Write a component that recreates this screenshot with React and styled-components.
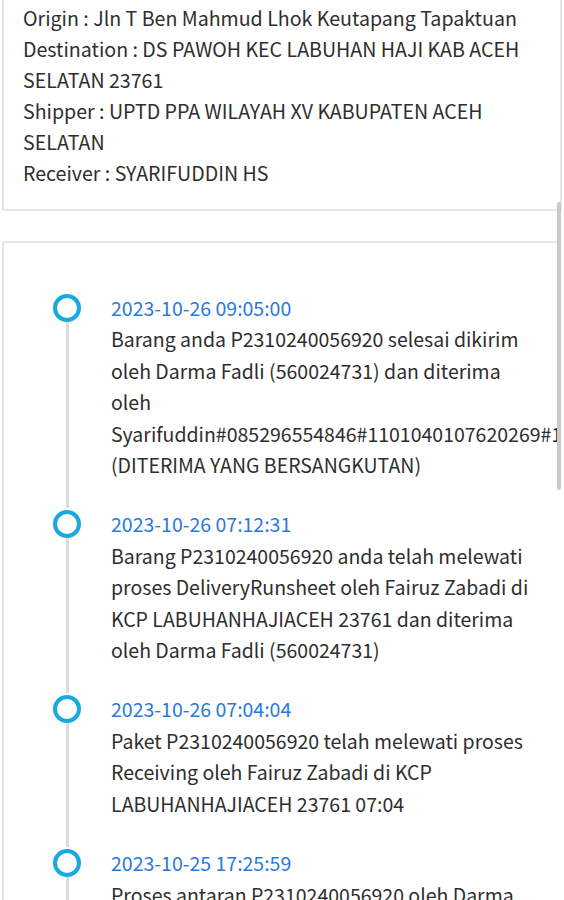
import React from 'react';
import styled, { createGlobalStyle } from 'styled-components';

const GlobalStyle = createGlobalStyle`
  html, body {
    margin: 0;
    padding: 0;
    background: #ffffff;
    overflow-x: hidden;
  }
  body {
    font-family: "Noto Sans CJK SC", "Noto Sans", sans-serif;
    color: #2e2e2e;
  }
`;

const Page = styled.div`
  display: flex;
  flex-direction: column;
  gap: 30px;
  padding: 0 2px;
`;

const InfoCard = styled.div`
  border: 2px solid #e6e6e6;
  border-top: none;
  padding: 2px 10px 21px 19px;
  font-size: 19.6px;
  line-height: 31px;
`;

const InfoLine = styled.div``;

const TrackCard = styled.div`
  border: 2px solid #e6e6e6;
  border-right-color: transparent;
  padding: 49px 0 0 49px;
`;

const Item = styled.div`
  display: flex;
`;

const Marker = styled.div`
  flex: 0 0 58px;
  display: flex;
  flex-direction: column;
  align-items: flex-start;
  padding-top: 2px;
`;

const Dot = styled.div`
  width: 28px;
  height: 28px;
  box-sizing: border-box;
  border: 4px solid #18aade;
  border-radius: 50%;
  background: #fff;
`;

const Line = styled.div`
  flex: 1;
  width: 3px;
  margin-left: 12.5px;
  background: #d8dbe0;
`;

const Body = styled.div`
  flex: 1;
  min-width: 0;
  padding: 0 20px 28px 0;
  font-size: 19.5px;
  line-height: 31.4px;
`;

const Stamp = styled.div`
  color: #2a7adb;
`;

const Text = styled.div`
  color: #2e2e2e;
`;

const Scroll = styled.div`
  position: fixed;
  top: 202px;
  right: 3px;
  width: 4px;
  height: 288px;
  border-radius: 2px;
  background: #c9c9c9;
`;

const info = [
  'Origin : Jln T Ben Mahmud Lhok Keutapang Tapaktuan',
  'Destination : DS PAWOH KEC LABUHAN HAJI KAB ACEH SELATAN 23761',
  'Shipper : UPTD PPA WILAYAH XV KABUPATEN ACEH SELATAN',
  'Receiver : SYARIFUDDIN HS',
];

const events = [
  {
    time: '2023-10-26 09:05:00',
    text: 'Barang anda P2310240056920 selesai dikirim oleh Darma Fadli (560024731) dan diterima oleh Syarifuddin#085296554846#1101040107620269#1 (DITERIMA YANG BERSANGKUTAN)',
  },
  {
    time: '2023-10-26 07:12:31',
    text: 'Barang P2310240056920 anda telah melewati proses DeliveryRunsheet oleh Fairuz Zabadi di KCP LABUHANHAJIACEH 23761 dan diterima oleh Darma Fadli (560024731)',
  },
  {
    time: '2023-10-26 07:04:04',
    text: 'Paket P2310240056920 telah melewati proses Receiving oleh Fairuz Zabadi di KCP LABUHANHAJIACEH 23761 07:04',
  },
  {
    time: '2023-10-25 17:25:59',
    text: 'Proses antaran P2310240056920 oleh Darma Fadli (560024731) di KCP LABUHANHAJIACEH 23761',
  },
];

export default function App() {
  return (
    <>
      <GlobalStyle />
      <Page>
        <InfoCard>
          {info.map((l) => (
            <InfoLine key={l}>{l}</InfoLine>
          ))}
        </InfoCard>
        <TrackCard>
          {events.map((e) => (
            <Item key={e.time}>
              <Marker>
                <Dot />
                <Line />
              </Marker>
              <Body>
                <Stamp>{e.time}</Stamp>
                <Text>{e.text}</Text>
              </Body>
            </Item>
          ))}
        </TrackCard>
      </Page>
      <Scroll />
    </>
  );
}
